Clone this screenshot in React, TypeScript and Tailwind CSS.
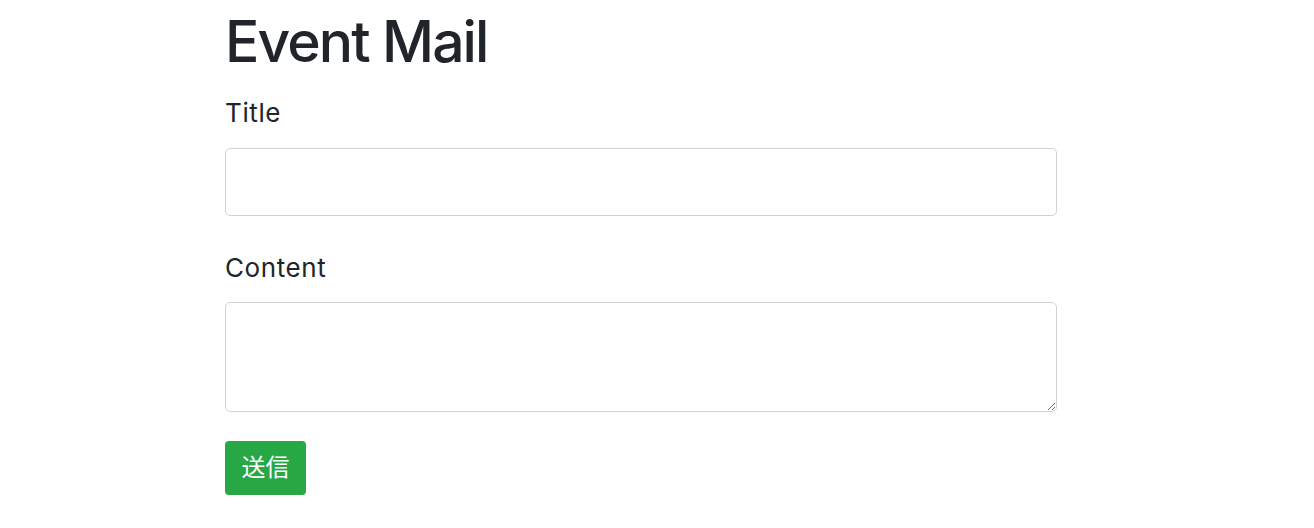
export default function App() {
  return (
    <div className="min-h-screen bg-white font-['Inter','Noto_Sans_CJK_JP',sans-serif] text-[#212529]">
      <div className="ml-[225px] w-[832px] pt-[8px]">
        <h1 className="text-[57px] font-[520] leading-[1.2] tracking-[-1.9px]">Event Mail</h1>
        <form className="mt-[17px]">
          <div className="mb-[32px]">
            <label className="block text-[26px] leading-[1.5] tracking-[0.6px] mb-[16px]">Title</label>
            <input
              type="text"
              className="block h-[68px] w-full rounded-[5px] border border-[#ced4da] px-3 outline-none"
            />
          </div>
          <div className="mb-[29px]">
            <label className="block text-[26px] leading-[1.5] tracking-[0.6px] mb-[15px]">Content</label>
            <textarea className="block h-[110px] w-full rounded-[5px] border border-[#ced4da] px-3 outline-none" />
          </div>
          <button
            type="button"
            className="h-[54px] w-[81px] rounded-[4px] bg-[#28a745] text-[24px] text-white"
          >
            送信
          </button>
        </form>
      </div>
    </div>
  );
}
